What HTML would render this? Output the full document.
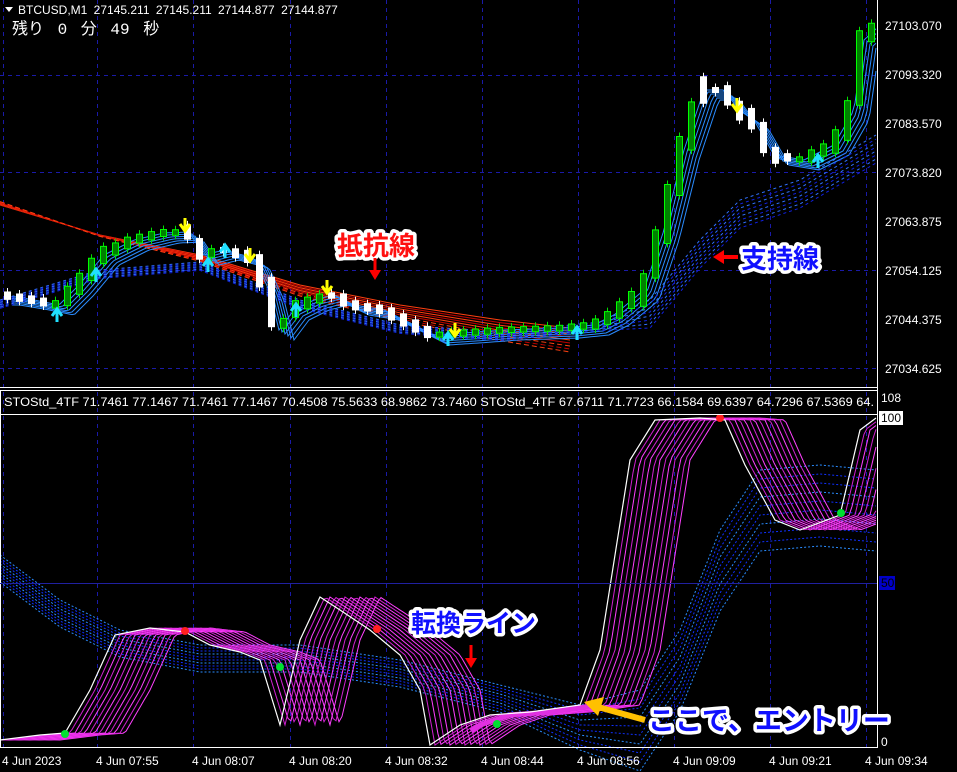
<!DOCTYPE html>
<html><head><meta charset="utf-8"><style>
html,body{margin:0;padding:0;background:#000;width:957px;height:772px;overflow:hidden}
svg{position:absolute;left:0;top:0}
.t{font-family:"Liberation Sans",sans-serif;font-size:12px;fill:#fff}
.a{font-family:"Liberation Sans","Noto Sans CJK JP",sans-serif;font-weight:bold;font-size:26px;paint-order:stroke;stroke:#fff;stroke-width:7px;stroke-linejoin:round}
</style></head><body>
<svg id="s" width="957" height="772" xmlns="http://www.w3.org/2000/svg">
<g id="grid" stroke="#1a1aa8" stroke-dasharray="4,4" stroke-width="1"></g>
<g id="bands"></g>
<g id="cand"></g>
<g id="ind"></g>
<line x1="877.5" y1="0" x2="877.5" y2="748" stroke="#fff"/>
<line x1="0" y1="387.5" x2="877" y2="387.5" stroke="#fff"/>
<line x1="0" y1="390.5" x2="877" y2="390.5" stroke="#fff"/>
<line x1="0" y1="414.5" x2="877" y2="414.5" stroke="#fff"/>
<line x1="0.5" y1="390" x2="0.5" y2="748" stroke="#fff"/>
<line x1="0" y1="747.5" x2="877" y2="747.5" stroke="#fff"/>
<line x1="0" y1="583.5" x2="877" y2="583.5" stroke="#2020a0"/>
<polygon points="5,7 13,7 9,12" fill="#fff"/>
<text class="t" x="18" y="14" style="word-spacing:3px">BTCUSD,M1   27145.211 27145.211 27144.877 27144.877</text>
<text x="12" y="34" style="font-family:'Liberation Mono','Noto Sans CJK JP',monospace;font-size:16px;fill:#fff;word-spacing:4px">残り 0 分 49 秒</text>
<text class="t" x="4" y="406" textLength="870" lengthAdjust="spacingAndGlyphs">STOStd_4TF 71.7461 77.1467 71.7461 77.1467 70.4508 75.5633 68.9862 73.7460  STOStd_4TF 67.6711 71.7723 66.1584 69.6397 64.7296 67.5369 64.</text>
<g class="t" id="pax"></g>
<text class="t" x="881" y="402">108</text>
<rect x="879" y="411" width="24" height="14" fill="#fff"/>
<text x="881" y="422" style="font-family:'Liberation Sans';font-size:12px;fill:#000">100</text>
<rect x="879" y="576" width="16" height="14" fill="#0000c8"/>
<text class="t" x="881" y="587" style="fill:#000">50</text>
<text class="t" x="881" y="746">0</text>
<g class="t" id="tax"></g>
<text class="a" x="337" y="255" fill="#ff1010">抵抗線</text>
<line x1="375" y1="258" x2="375" y2="272" stroke="#f00" stroke-width="3"/><polygon points="369,270 381,270 375,280" fill="#f00"/>
<text class="a" x="741" y="268" fill="#1010ff">支持線</text>
<line x1="738" y1="257" x2="722" y2="257" stroke="#f00" stroke-width="4"/><polygon points="724,250 724,264 713,257" fill="#f00"/>
<text class="a" x="411" y="632" fill="#1010ff" style="font-size:25px">転換ライン</text>
<line x1="471" y1="645" x2="471" y2="660" stroke="#f00" stroke-width="3"/><polygon points="465,658 477,658 471,668" fill="#f00"/>
<text class="a" x="648" y="730" fill="#1010ff" style="font-size:27px">ここで、エントリー</text>
<line x1="645" y1="720" x2="598" y2="707" stroke="#ffc000" stroke-width="6"/><polygon points="584,702 604,697 598,716" fill="#ffc000"/>
</svg>
<script>
var S='http://www.w3.org/2000/svg';
function el(p,n,a){var e=document.createElementNS(S,n);for(var k in a)e.setAttribute(k,a[k]);document.getElementById(p).appendChild(e);return e}
[75,172,270,368].forEach(function(y){el('grid','line',{x1:0,x2:877,y1:y+.5,y2:y+.5})});
[3,97,193,290,386,482,578,674,770,866].forEach(function(x){el('grid','line',{x1:x+.5,x2:x+.5,y1:0,y2:748})});
[['27103.070',30],['27093.320',79],['27083.570',128],['27073.820',177],['27063.875',226],['27054.125',275],['27044.375',324],['27034.625',373]].forEach(function(p){var t=el('pax','text',{x:885,y:p[1]});t.textContent=p[0]});
[['4 Jun 2023',2],['4 Jun 07:55',96],['4 Jun 08:07',192],['4 Jun 08:20',289],['4 Jun 08:32',385],['4 Jun 08:44',481],['4 Jun 08:56',577],['4 Jun 09:09',673],['4 Jun 09:21',769],['4 Jun 09:34',865]].forEach(function(p){var t=el('tax','text',{x:p[1],y:765});t.textContent=p[0]});
function interp(pts,x){for(var i=1;i<pts.length;i++){if(x<=pts[i][0]){var a=pts[i-1],b=pts[i];return a[1]+(b[1]-a[1])*(x-a[0])/(b[0]-a[0])}}return pts[pts.length-1][1]}
function smooth(pts,lag){var o=[];for(var x=0;x<=876;x+=3){o.push([x,interp(pts,Math.max(0,x-lag))])}return o}
function pl(g,pts,col,w,dash,off){var d=pts.map(function(p){return p[0]+','+(p[1]+(off||0)).toFixed(1)}).join(' ');var a={points:d,fill:'none',stroke:col,'stroke-width':w};if(dash)a['stroke-dasharray']=dash;el(g,'polyline',a)}
var P=[[0,295],[30,300],[55,305],[75,285],[100,255],[130,240],[160,233],[185,232],[200,255],[220,250],[250,258],[265,290],[275,330],[290,310],[310,300],[330,295],[350,305],[380,310],[410,325],[430,335],[460,333],[500,330],[560,328],[590,325],[610,315],[640,290],[660,230],[680,150],[700,90],[720,90],[735,110],[750,120],[770,155],[800,160],[830,145],[850,110],[860,40],[876,25]];
var R=[[0,205],[100,235],[200,255],[300,285],[400,305],[500,320],[570,328]];
for(var i=0;i<9;i++){pl('bands',R.map(function(p){return [p[0],p[1]+i*3-(570-p[0])*i*0.006]}),i%2?'#c00000':'#ff4010',1,i>5?'5,3':null)}
for(var i=0;i<6;i++){pl('bands',smooth(P,4+i*3).filter(function(p){return p[0]>10}),'#2a8cff',1,null,i*2)}
var B=[[0,300],[100,270],[200,262],[300,300],[400,325],[500,332],[600,322],[650,300],[700,240],[740,200],[800,180],[876,135]];
for(var i=0;i<8;i++){pl('bands',B.map(function(p){return [p[0],p[1]+i*4*(p[0]>600?1:0.3)]}),i%2?'#1020e0':'#3070ff',1,'3,3')}
for(var x=4;x<870;x+=12){var y=interp(P,x),h=5+Math.abs(interp(P,x+8)-interp(P,x-8))*0.9;var up=interp(P,x+8)<y;el('cand','line',{x1:x+3.5,x2:x+3.5,y1:y-h/2-4,y2:y+h/2+4,stroke:up?'#00e000':'#fff'});el('cand','rect',{x:x+0.5,y:y-h/2,width:6,height:h,fill:up?'#008000':'#fff',stroke:up?'#00ff00':'#fff','stroke-width':1})}
[[185,228,'#ff0'],[250,258,'#ff0'],[327,290,'#ff0'],[455,333,'#ff0'],[737,108,'#ff0']].forEach(function(a){el('cand','path',{d:'M'+(a[0]-5)+','+(a[1]-4)+' l5,7 l5,-7 M'+a[0]+','+(a[1]-10)+' v12',stroke:a[2],'stroke-width':3,fill:'none'})});
[[57,312],[96,272],[208,262],[225,248],[296,307],[448,336],[577,330],[818,158]].forEach(function(a){el('cand','path',{d:'M'+(a[0]-5)+','+(a[1]+4)+' l5,-7 l5,7 M'+a[0]+','+(a[1]+10)+' v-12',stroke:'#20e0ff','stroke-width':3,fill:'none'})});
var W=[[0,740],[40,735],[65,733],[90,690],[115,635],[150,628],[185,632],[210,645],[240,652],[260,660],[280,725],[300,640],[320,597],[340,610],[370,630],[400,655],[420,690],[430,745],[460,725],[490,715],[530,712],[580,705],[600,650],[630,460],[655,420],[700,418],[725,420],[745,465],[775,520],[800,530],[840,515],[860,430],[876,418]];
var BL=[[0,555],[60,600],[120,630],[200,645],[300,645],[400,660],[500,685],[580,705],[640,690],[680,630],[720,530],[760,470],[820,465],[876,470]];
for(var i=0;i<10;i++){pl('ind',BL.map(function(p){return [p[0],p[1]+i*5*(p[0]<560?0.6:1)+ (p[0]>600?i*4:0)]}),i%3?'#1030ff':'#2a8cff',1,'2,2')}
for(var i=12;i>=1;i--){pl('ind',smooth(W,i*5),i%2?'#d020d0':'#ff40ff',1)}
pl('ind',smooth(W,20).filter(function(p){return p[0]>470&&p[0]<590}),'#e030e0',5);
pl('ind',W,'#fff',1.2);
[[65,734],[280,667],[497,724],[841,513]].forEach(function(p){el('ind','circle',{cx:p[0],cy:p[1],r:4,fill:'#00e030'})});
[[185,631],[377,629],[720,418]].forEach(function(p){el('ind','circle',{cx:p[0],cy:p[1],r:4,fill:'#ff2020'})});
</script>
</body></html>
